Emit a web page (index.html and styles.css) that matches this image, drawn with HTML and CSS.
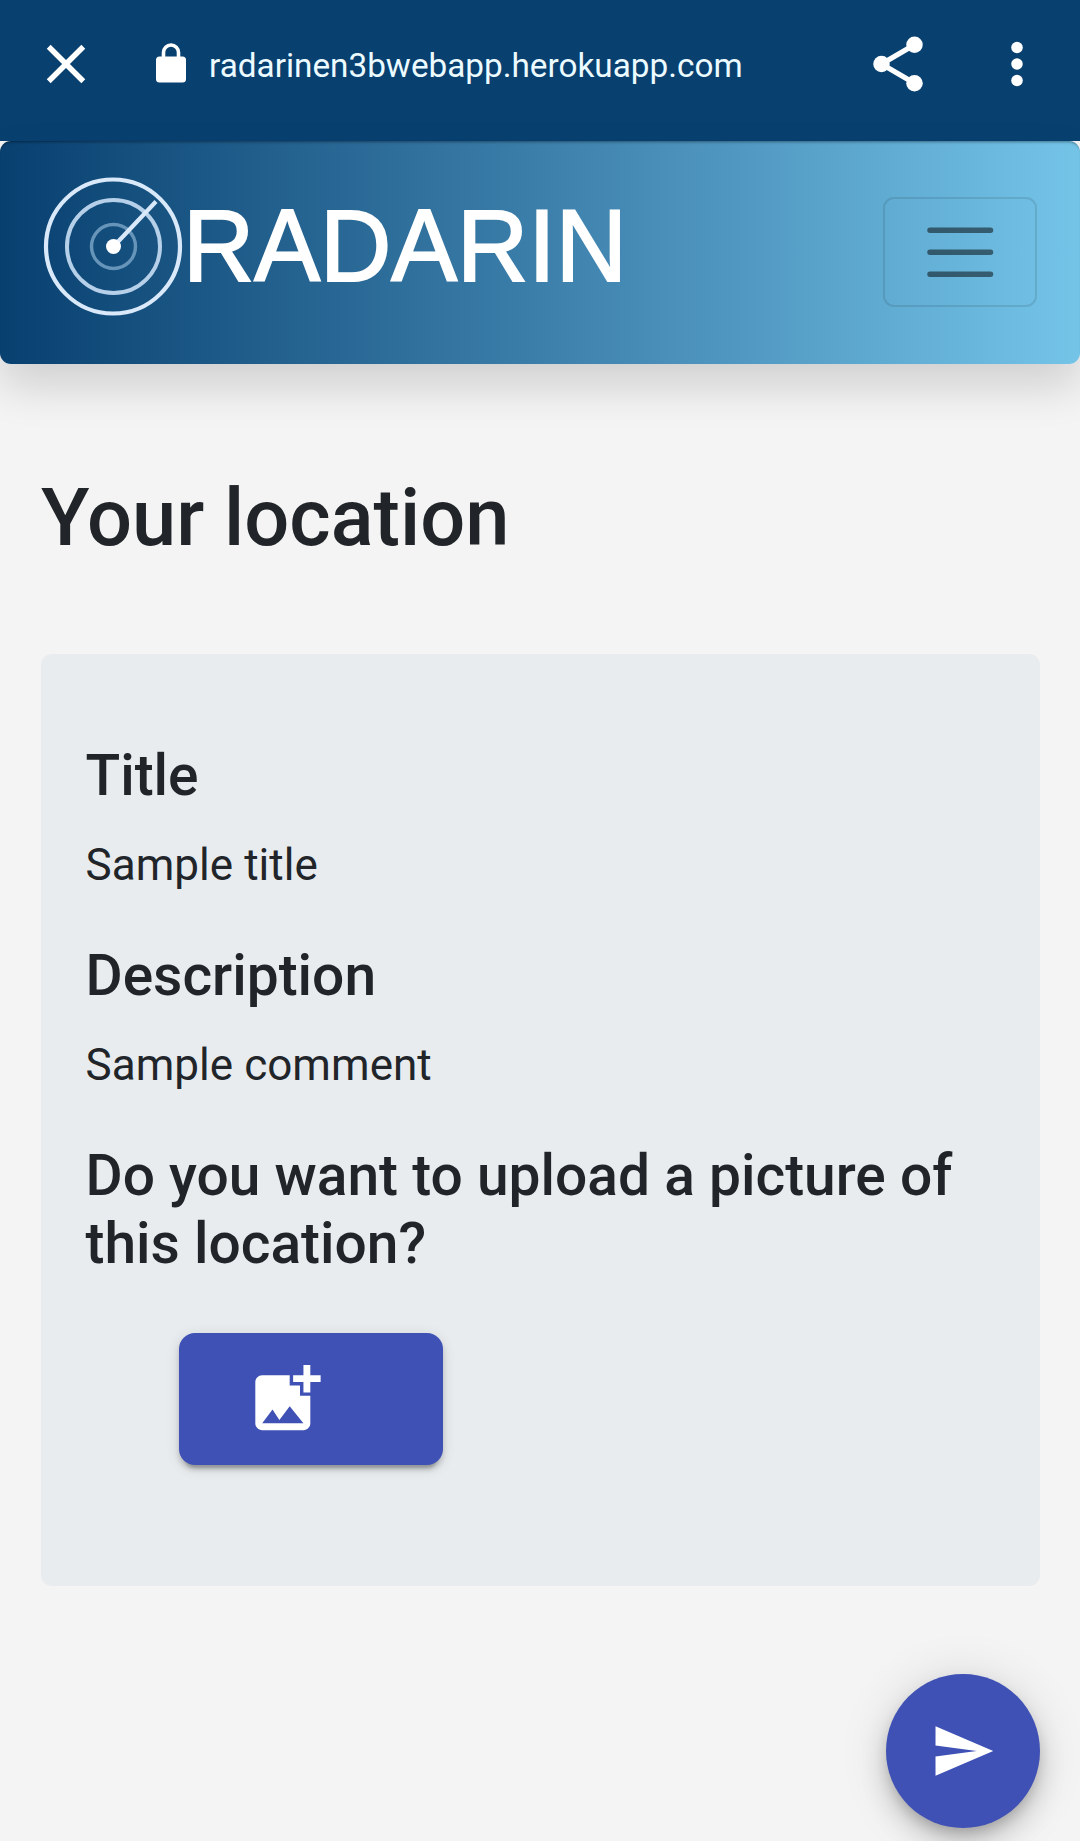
FILE: index.html
```html
<!DOCTYPE html>
<html lang="en">
<head>
<meta charset="utf-8">
<title>Radarin</title>
<link rel="stylesheet" href="styles.css">
</head>
<body>
<header class="browser-bar">
  <svg class="icon" viewBox="0 0 24 24"><path d="M19 6.41L17.59 5 12 10.59 6.41 5 5 6.41 10.59 12 5 17.59 6.41 19 12 13.41 17.59 19 19 17.59 13.41 12z"/></svg>
  <svg class="lock" viewBox="0 0 30 40"><rect x="0" y="13.5" width="30" height="26" rx="3.5"/><path class="shackle" d="M7.5 15V9.5a7.5 7.5 0 0 1 15 0V15"/></svg>
  <span class="url">radarinen3bwebapp.herokuapp.com</span>
  <svg class="icon share" viewBox="0 0 24 24"><path class="share-links" d="M18 5L6 12l12 7"/><circle cx="18" cy="5" r="3"/><circle cx="6" cy="12" r="3"/><circle cx="18" cy="19" r="3"/></svg>
  <svg class="icon more" viewBox="0 0 24 24"><circle cx="12" cy="6" r="2.1"/><circle cx="12" cy="12" r="2.1"/><circle cx="12" cy="18" r="2.1"/></svg>
</header>
<nav class="navbar">
  <svg class="logo" viewBox="0 0 620 142">
    <g class="rings">
      <circle class="ring-outer" cx="69" cy="69.5" r="67"/>
      <circle class="ring-middle" cx="69.5" cy="69.5" r="46.5"/>
      <circle class="ring-inner" cx="69.5" cy="69.5" r="22"/>
      <path class="sweep" d="M69.5 69.5L112 24.5"/>
    </g>
    <circle class="dot" cx="69.5" cy="69.5" r="7.5"/>
    <text class="wordmark" x="139" y="103.5" textLength="444" lengthAdjust="spacingAndGlyphs">RADARIN</text>
  </svg>
  <button class="toggler" aria-label="Menu"><svg class="bars" viewBox="0 0 30 30"><path d="M4 7h22M4 15h22M4 23h22"/></svg></button>
</nav>
<main class="page">
  <h1 class="page-title">Your location</h1>
  <section class="card">
    <h2 class="label">Title</h2>
    <p class="value">Sample title</p>
    <h2 class="label">Description</h2>
    <p class="value">Sample comment</p>
    <h2 class="label">Do you want to upload a picture of this location?</h2>
    <button class="upload" aria-label="Add picture"><svg class="photo" viewBox="0 0 24 24"><path d="M19 7v3h-2V7h-3V5h3V2h2v3h3v2h-3zm-3 4V8h-3V5H5c-1.1 0-2 .9-2 2v12c0 1.1.9 2 2 2h12c1.1 0 2-.9 2-2v-8h-3zM5 19l3-4 2 3 3-4 4 5H5z"/></svg></button>
  </section>
  <button class="send" aria-label="Send"><svg class="icon" viewBox="0 0 24 24"><path d="M2.01 21L23 12 2.01 3 2 10l15 2-15 2z"/></svg></button>
</main>
</body>
</html>
```
FILE: styles.css
```css
* { box-sizing: border-box; }
body {
  margin: 0;
  height: 1841px;
  overflow: hidden;
  background: #f4f4f4;
  color: #212529;
  font-family: Roboto, sans-serif;
}
button { border: 0; padding: 0; font: inherit; }
svg { display: block; flex: none; fill: #fff; }
.icon { width: 66px; height: 66px; }

.browser-bar {
  display: flex;
  align-items: center;
  height: 141px;
  padding: 0 30px 13px 33px;
  background: #084070;
}
.lock { width: 30px; height: 40px; margin: -2px 0 0 57px; }
.shackle { fill: none; stroke: #fff; stroke-width: 3.6; }
.url {
  margin: 4px 0 0 23px;
  color: #ecfbff;
  font-size: 33.3px;
  line-height: 40px;
  white-space: nowrap;
}
.share { margin-left: auto; }
.share-links { fill: none; stroke: #fff; stroke-width: 1.9; }
.more { margin-left: 53px; }

.navbar {
  display: flex;
  align-items: center;
  justify-content: space-between;
  height: 223px;
  padding: 0 43px 0 44px;
  border-radius: 11px;
  background: linear-gradient(90deg, #084070, #3c7fab 50%, #74c4e8);
  box-shadow: inset 0 3px 3px -2px rgba(0, 0, 0, .4), 0 22px 44px rgba(0, 0, 0, .15);
}
.logo { width: 620px; height: 142px; margin-top: -9px; overflow: visible; }
.rings { fill: none; stroke: #d9e9fa; }
.ring-outer { stroke-width: 4.2; }
.ring-middle { stroke-width: 4; stroke: #b5d0e8; }
.ring-inner { stroke-width: 3.4; stroke: #6794b9; }
.sweep { stroke-width: 4.2; }
.wordmark {
  font-family: "Liberation Sans", sans-serif;
  font-size: 102.5px;
  stroke: #fff;
  stroke-width: 2;
}
.toggler {
  display: grid;
  place-items: center;
  width: 154px;
  height: 110px;
  margin-top: -1px;
  border: 2.75px solid rgba(0, 0, 0, .1);
  border-radius: 11px;
  background: none;
}
.bars { width: 82.5px; height: 82.5px; }
.bars path { stroke: rgba(0, 0, 0, .5); stroke-width: 2; stroke-linecap: round; }

.page { display: flex; flex-direction: column; padding: 0 40px 0 41px; }
.page-title {
  margin: 105px 0 88px;
  font-size: 79.4px;
  font-weight: 500;
  line-height: 97px;
}
.card {
  height: 932px;
  padding: 88px 45px 0 44.5px;
  border-radius: 11px;
  background: #e8ecef;
}
.label { margin: 0 0 22px; font-size: 56.9px; font-weight: 500; line-height: 68px; }
.value { margin: 0 0 44px; font-size: 44px; line-height: 66px; letter-spacing: .05px; }
.upload {
  display: flex;
  align-items: center;
  width: 264px;
  height: 132px;
  margin: 55px 0 0 93.5px;
  padding-left: 66px;
  border-radius: 16px;
  background: #3f51b5;
  box-shadow: 0 8px 3px -5px rgba(0, 0, 0, .2), 0 5px 5px rgba(0, 0, 0, .14), 0 3px 14px rgba(0, 0, 0, .12);
}
.photo { width: 82.5px; height: 82.5px; }
.send {
  display: grid;
  place-items: center;
  align-self: flex-end;
  width: 154px;
  height: 154px;
  margin-top: 88px;
  border-radius: 50%;
  background: #3f51b5;
  box-shadow: 0 8px 14px -3px rgba(0, 0, 0, .2), 0 16px 28px rgba(0, 0, 0, .14), 0 3px 50px rgba(0, 0, 0, .12);
}
```
